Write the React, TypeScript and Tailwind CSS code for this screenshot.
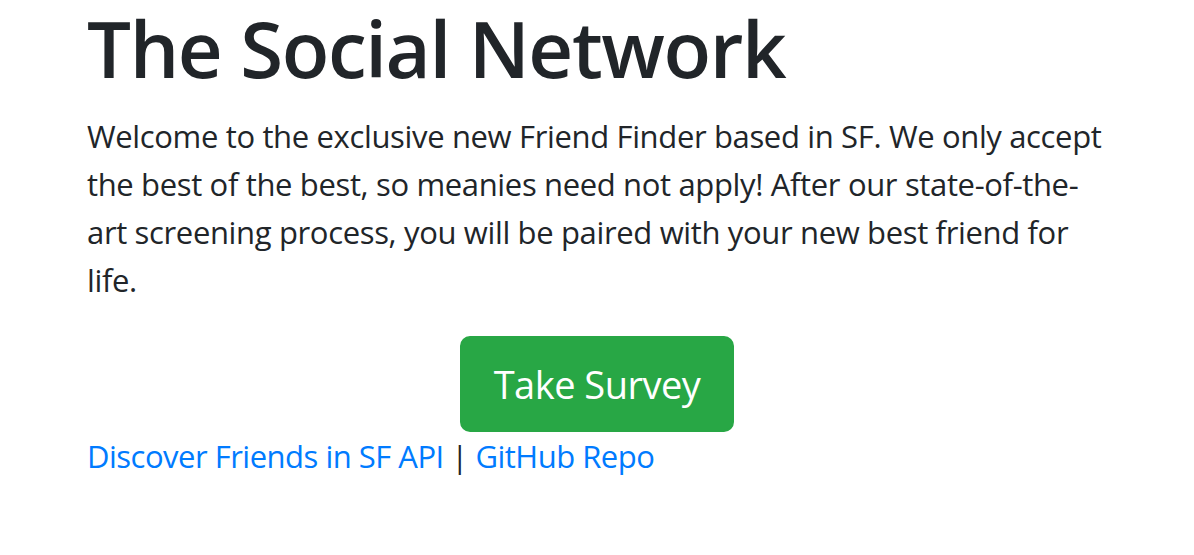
export default function App() {
  return (
    <div
      className="min-h-screen bg-white text-[#212529]"
      style={{ fontFamily: '"Open Sans", "Noto Sans", sans-serif' }}
    >
      <div className="w-[1020px] mx-auto">
        <h1 className="text-[78px] leading-[96px] font-semibold tracking-[-1.4px] mb-4">The Social Network</h1>
        <p className="text-[31px] leading-[48px] tracking-[-0.35px] mb-8">
          Welcome to the exclusive new Friend Finder based in SF. We only accept the best of the best, so
          meanies need not apply! After our state-of-the-art screening process, you will be paired with
          your new best friend for life.
        </p>
        <div className="flex justify-center">
          <a
            href="#survey"
            className="inline-block bg-[#28a745] border-2 border-[#28a745] text-white text-[38px] leading-[60px] tracking-[-0.5px] px-8 py-4 rounded-[10px]"
          >
            Take Survey
          </a>
        </div>
        <p className="text-[31px] leading-[48px] tracking-[-0.5px]">
          <a href="#api" className="text-[#007bff]">Discover Friends in SF API</a> |{' '}
          <a href="#repo" className="text-[#007bff]">GitHub Repo</a>
        </p>
      </div>
    </div>
  )
}
